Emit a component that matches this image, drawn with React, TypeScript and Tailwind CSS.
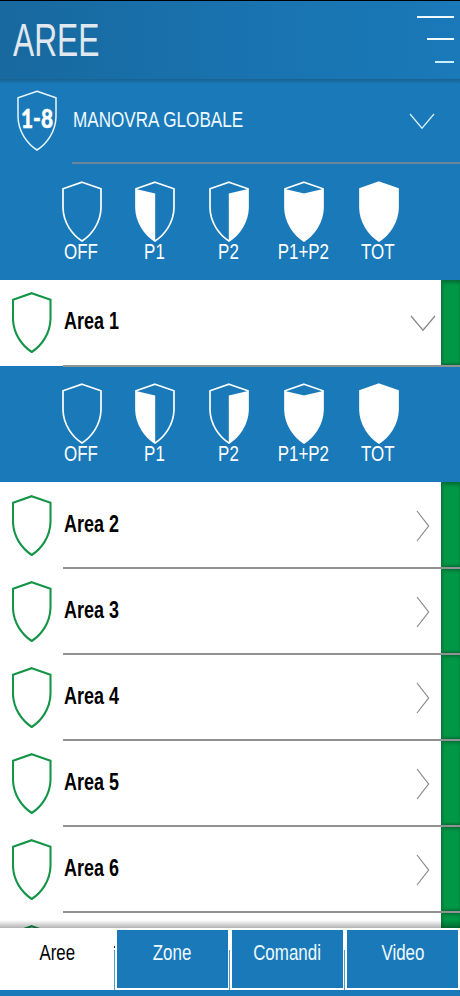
import React from "react";

const SHIELD = "M20 1.2 L39 7.8 V27 C38.6 42 29.5 54 20 60 C10.5 54 1.4 42 1 27 V7.8 Z";

type Mode = "OFF" | "P1" | "P2" | "P1+P2" | "TOT";

function ModeShield({ mode }: { mode: Mode }) {
  return (
    <svg viewBox="0 0 40 61" className="block h-[61px] w-10" fill="none">
      <path d={SHIELD} stroke="#fff" strokeWidth="1.7" fill={mode === "TOT" ? "#fff" : "none"} />
      {(mode === "P1" || mode === "P1+P2") && (
        <path d="M1 8 L20.2 12.6 V60 C10.5 54 1.4 42 1 27 Z" fill="#fff" />
      )}
      {(mode === "P2" || mode === "P1+P2") && (
        <path d="M39 8 L19.8 12.6 V60 C29.5 54 38.6 42 39 27 Z" fill="#fff" />
      )}
    </svg>
  );
}

const MODES: { mode: Mode; cell: string }[] = [
  { mode: "OFF", cell: "w-[73px]" },
  { mode: "P1", cell: "w-[74px]" },
  { mode: "P2", cell: "w-[74px]" },
  { mode: "P1+P2", cell: "w-[76px]" },
  { mode: "TOT", cell: "w-[74px]" },
];

function ModePanel() {
  return (
    <div className="flex h-[116px] shrink-0 bg-[#1a79b9] pl-[45px] pt-[17px]">
      {MODES.map(({ mode, cell }) => (
        <div key={mode} className={"flex flex-col items-center " + cell}>
          <ModeShield mode={mode} />
          <span className="-mt-px block -translate-x-px scale-x-[0.77] whitespace-nowrap text-[22px] leading-[22px] text-white">
            {mode}
          </span>
        </div>
      ))}
    </div>
  );
}

function AreaShield() {
  return (
    <svg viewBox="0 0 40 61" preserveAspectRatio="none" className="ml-3 block h-[61px] w-[39.5px] shrink-0" fill="none">
      <path d={SHIELD} stroke="#149447" strokeWidth="2.1" />
    </svg>
  );
}

function Chevron({ down, color }: { down?: boolean; color: string }) {
  return down ? (
    <svg viewBox="0 0 26 17" className="block h-[17px] w-[26px]" fill="none">
      <path d="M1 1 L13 15.2 L25 1" stroke={color} strokeWidth="1.2" />
    </svg>
  ) : (
    <svg viewBox="0 0 14 32" className="block h-8 w-[14px]" fill="none">
      <path d="M1 1 L12.6 16 L1 31" stroke={color} strokeWidth="1.2" />
    </svg>
  );
}

function AreaRow({ n, open }: { n: number; open?: boolean }) {
  return (
    <div className="flex h-[86px] shrink-0 flex-col bg-white">
      <div className="flex h-[85px] items-stretch">
        <div className={open ? "flex flex-1 pt-[12px]" : "flex flex-1 pt-[12.5px]"}>
          <AreaShield />
          <span
            className={
              "ml-[12.5px] block h-[25px] origin-left scale-x-[0.78] whitespace-nowrap text-[23px] font-bold leading-[25px] text-black " +
              (open ? "mt-[17px]" : "mt-[17.5px]")
            }
          >
            Area {n}
          </span>
          <span className={open ? "ml-auto mr-[5px] mt-[23px]" : "ml-auto mr-[11px] mt-[15px]"}>
            <Chevron down={open} color="#85878a" />
          </span>
        </div>
        <div className="w-[19px] bg-[#009846] shadow-[inset_2px_0_3px_#087b3c,inset_0_4px_4px_-2px_#075f30,inset_0_-3px_3px_-2px_#075f30]" />
      </div>
      <div className="relative -mb-px ml-[63px] h-[2px] shrink-0 bg-[#909294]" />
    </div>
  );
}

const TABS = [
  { label: "Zone", cell: "w-[115px]" },
  { label: "Comandi", cell: "w-[115px]" },
  { label: "Video", cell: "w-[115px]" },
];

export default function App() {
  return (
    <div className="flex h-[996px] w-[460px] flex-col overflow-hidden bg-[#1a79b9] font-['Liberation_Sans',Arial,sans-serif]">
      <header className="flex h-[79px] shrink-0 justify-between border-t border-black bg-linear-to-r from-[#17699f] via-[#1972ae] to-[#1a79b9]">
        <h1 className="ml-[13px] mt-[12px] origin-left scale-x-[0.675] text-[47px] leading-[54px] text-[#e2e8ef]">AREE</h1>
        <div className="mr-[6px] flex flex-col items-end pt-[15px]">
          <i className="mb-5 block h-[2px] w-[37px] bg-[#eefaff]" />
          <i className="mb-[21px] block h-[2px] w-[27px] bg-[#eefaff]" />
          <i className="block h-[2px] w-[19px] bg-[#c9f0ff]" />
        </div>
      </header>
      <div className="h-[5px] shrink-0 bg-linear-to-b from-[#196291] to-[#1a79b9]" />

      <section className="flex h-[80px] shrink-0 flex-col">
        <div className="flex h-[78px] pt-[6px]">
          <svg viewBox="0 0 40 61" className="ml-[16.5px] block h-[61px] w-10 shrink-0" fill="none">
            <path d={SHIELD} stroke="#e9f8ff" strokeWidth="1.5" />
            <text
              x="20"
              y="38"
              textAnchor="middle"
              textLength="32"
              lengthAdjust="spacingAndGlyphs"
              fill="#fff"
              stroke="#fff"
              strokeWidth="0.5"
              fontFamily="Lato, sans-serif"
              fontWeight="900"
              fontSize="26.5"
            >
              1-8
            </text>
          </svg>
          <span className="ml-[16px] mt-[17px] block h-[26px] origin-left scale-x-[0.76] whitespace-nowrap text-[22.5px] leading-[26px] text-[#f0faff]">
            MANOVRA GLOBALE
          </span>
          <span className="ml-auto mr-[25px] mt-[23px]">
            <Chevron down color="#d9f2ff" />
          </span>
        </div>
        <div className="ml-[72px] mt-px h-[2px] shrink-0 bg-[#6c8597]" />
      </section>

      <ModePanel />
      <AreaRow n={1} open />
      <ModePanel />

      <main className="relative flex h-[446px] shrink-0 flex-col overflow-hidden bg-white">
        <AreaRow n={2} />
        <AreaRow n={3} />
        <AreaRow n={4} />
        <AreaRow n={5} />
        <AreaRow n={6} />
        <div className="flex h-[16px] shrink-0 overflow-hidden">
          <div className="flex flex-1 pt-[12.5px]">
            <AreaShield />
          </div>
          <div className="w-[19px] bg-[#009846] shadow-[inset_2px_0_3px_#087b3c,inset_0_4px_4px_-2px_#075f30]" />
        </div>
        <div className="absolute inset-x-0 bottom-0 h-[8px] bg-linear-to-b from-black/0 to-black/30" />
      </main>

      <nav className="flex h-[62px] shrink-0 bg-white">
        <div className="flex w-[114px] justify-center pt-[13px]">
          <span className="block h-[24px] scale-x-[0.765] text-[22px] leading-[24px] text-black">Aree</span>
        </div>
        {TABS.map(({ label, cell }, i) => (
          <div key={label} className={"flex " + cell}>
            <div className="flex w-px flex-col pt-[18px]">
              {i === 0 ? <i className="mb-[2px] block h-[2px] bg-[#222]" /> : <i className="block h-[4px]" />}
              <i className="block flex-1 bg-[#4f9aca]" />
            </div>
            <div className="mb-[2px] ml-[2px] mr-px mt-[2px] flex flex-1 justify-center bg-[#1a79b9] pt-[11px]">
              <span className="block h-[24px] scale-x-[0.77] text-[22px] leading-[24px] text-[#eefaff]">{label}</span>
            </div>
          </div>
        ))}
        <div className="flex-1" />
      </nav>
    </div>
  );
}
